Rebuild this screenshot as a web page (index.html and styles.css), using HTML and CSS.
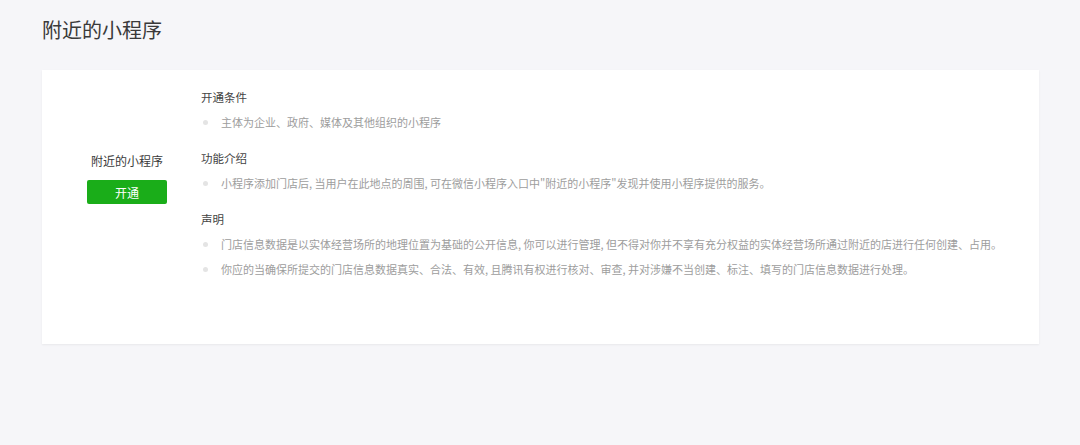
FILE: index.html
```html
<!DOCTYPE html>
<html lang="zh">
<head>
<meta charset="utf-8">
<title>附近的小程序</title>
<link rel="stylesheet" href="styles.css">
</head>
<body>
<div class="page">
  <h1 class="title">附近的小程序</h1>
  <div class="card">
    <div class="side">
      <div class="side-label">附近的小程序</div>
      <button class="btn">开通</button>
    </div>
    <div class="main">
      <div class="section">
        <h2 class="sec-title">开通条件</h2>
        <ul class="list">
          <li>主体为企业、政府、媒体及其他组织的小程序</li>
        </ul>
      </div>
      <div class="section">
        <h2 class="sec-title">功能介绍</h2>
        <ul class="list">
          <li>小程序添加门店后, 当用户在此地点的周围, 可在微信小程序入口中"附近的小程序"发现并使用小程序提供的服务。</li>
        </ul>
      </div>
      <div class="section">
        <h2 class="sec-title">声明</h2>
        <ul class="list">
          <li>门店信息数据是以实体经营场所的地理位置为基础的公开信息, 你可以进行管理, 但不得对你并不享有充分权益的实体经营场所通过附近的店进行任何创建、占用。</li>
          <li>你应的当确保所提交的门店信息数据真实、合法、有效, 且腾讯有权进行核对、审查, 并对涉嫌不当创建、标注、填写的门店信息数据进行处理。</li>
        </ul>
      </div>
    </div>
  </div>
</div>
</body>
</html>
```

FILE: styles.css
```css
* { box-sizing: border-box; }
html, body { margin: 0; padding: 0; }
body {
  background: #f6f6f9;
  font-family: "Microsoft YaHei", "Noto Sans CJK SC", "Noto Sans", sans-serif;
  color: #353535;
  height: 445px;
  overflow: hidden;
}
.page { padding: 0 41px 0 42px; }
.title {
  margin: 0;
  padding-top: 15px;
  font-size: 20px;
  line-height: 30px;
  font-weight: normal;
  color: #3a3a3a;
}
.card {
  margin-top: 25px;
  background: #fff;
  height: 274px;
  display: flex;
  box-shadow: 0 1px 2px rgba(0,0,0,0.06);
}
.side {
  width: 159px;
  padding-left: 11px;
  padding-top: 82px;
  display: flex;
  flex-direction: column;
  align-items: center;
}
.side-label {
  font-size: 12px;
  line-height: 18px;
  color: #3a3a3a;
}
.btn {
  margin-top: 10px;
  width: 80px;
  height: 24px;
  border: 0;
  border-radius: 2px;
  background: #1aad19;
  color: #fff;
  font-family: inherit;
  font-size: 12px;
  padding: 0;
}
.main {
  flex: 1;
  padding-top: 15px;
}
.section + .section { margin-top: 11px; }
.sec-title {
  margin: 0;
  font-size: 11.5px;
  line-height: 25px;
  font-weight: normal;
  color: #444;
}
.list {
  list-style: none;
  margin: 0;
  padding: 0;
}
.list li {
  position: relative;
  padding-left: 20px;
  font-size: 11px;
  line-height: 25px;
  color: #9d9d9d;
}
.list li::before {
  content: "";
  position: absolute;
  left: 2px;
  top: 10px;
  width: 5px;
  height: 5px;
  border-radius: 50%;
  background: #e4e4e4;
}
```
